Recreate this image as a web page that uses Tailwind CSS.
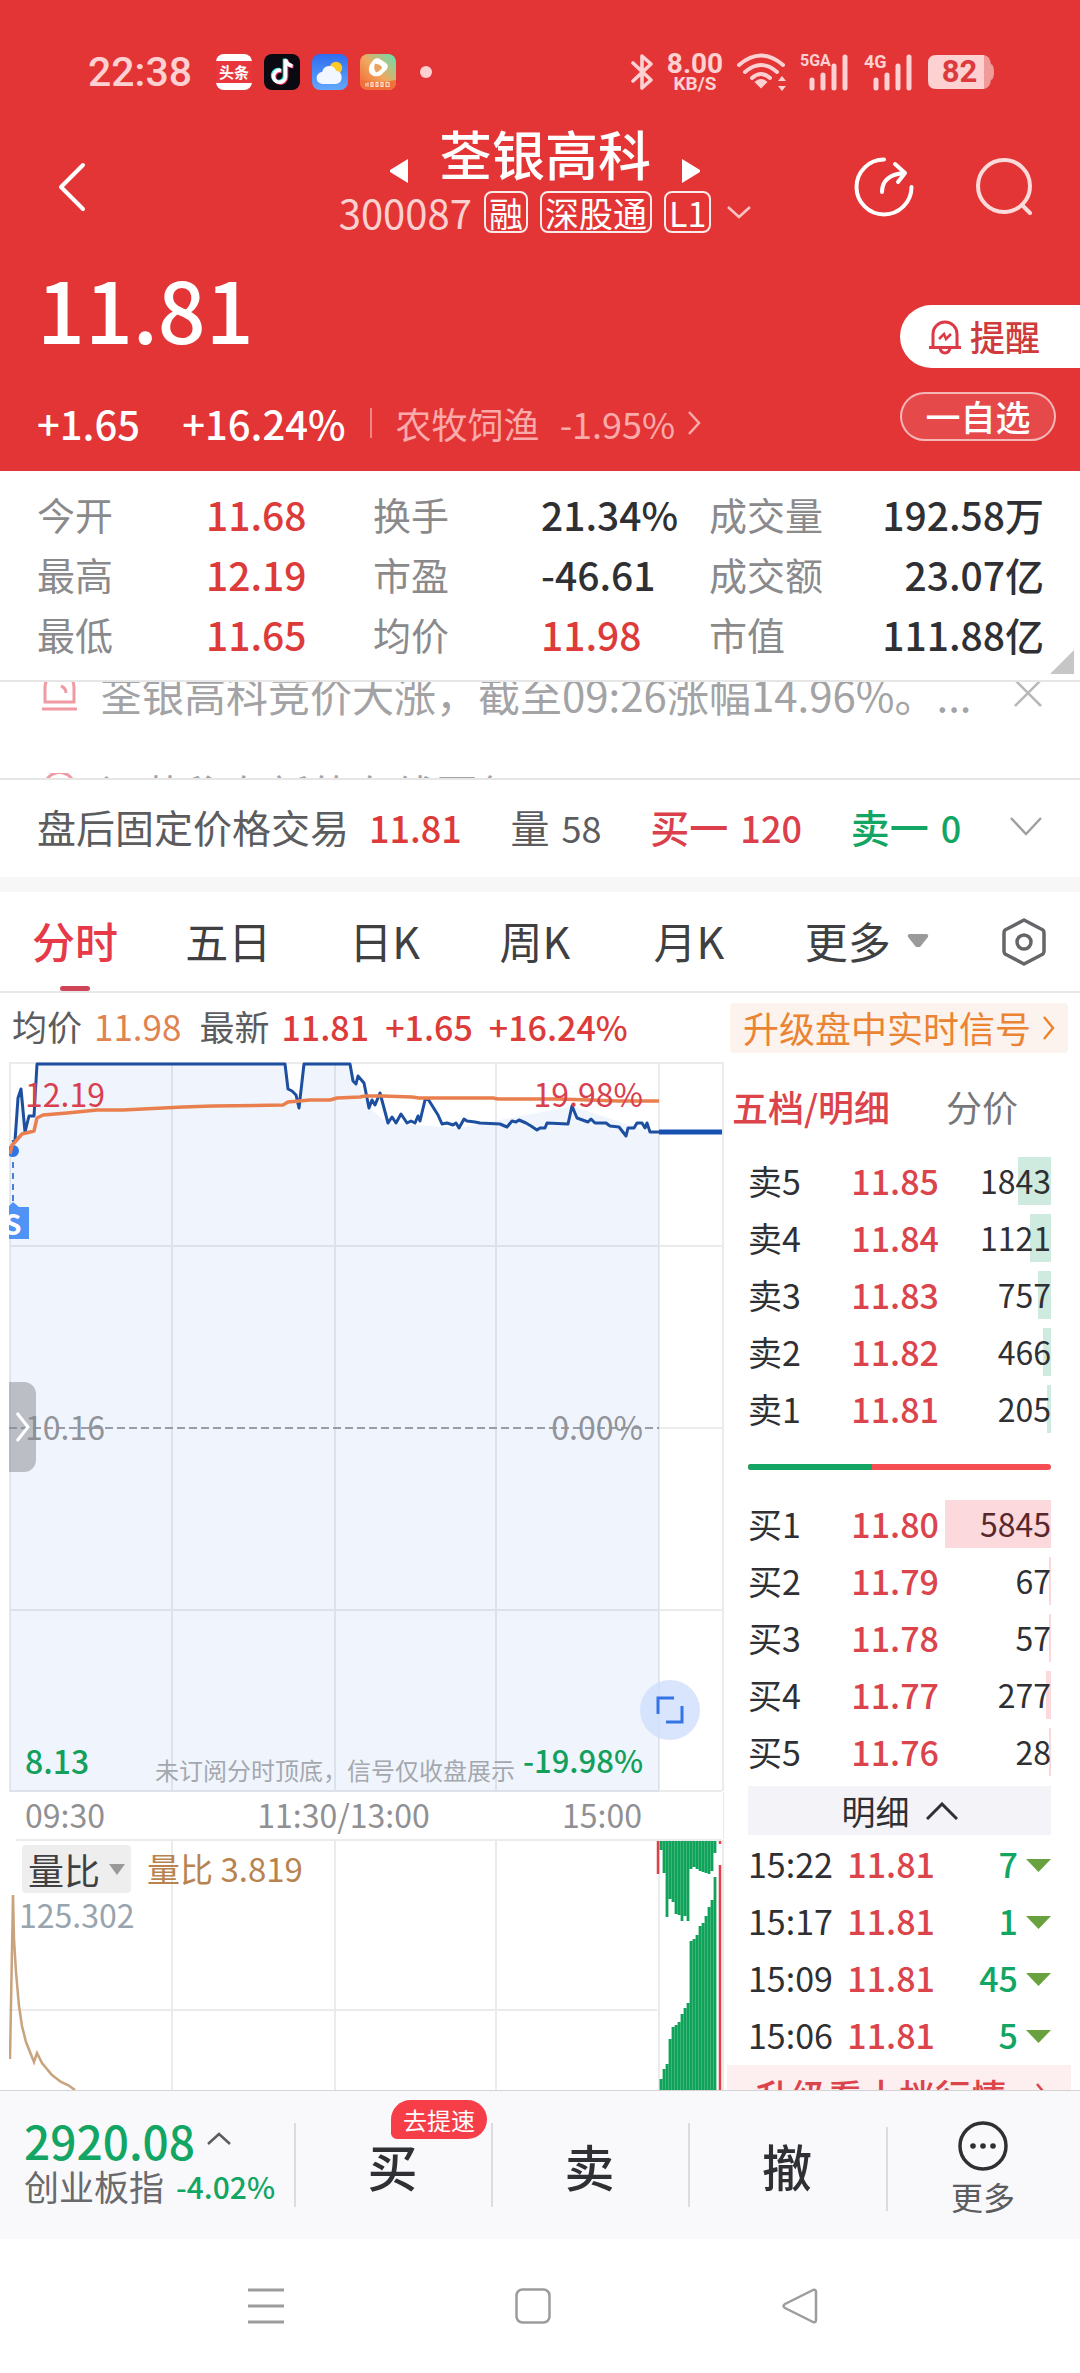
<!DOCTYPE html>
<html lang="zh-CN">
<head>
<meta charset="utf-8">
<meta name="viewport" content="width=device-width, initial-scale=1">
<title>荃银高科 300087</title>
<script src="https://cdn.jsdelivr.net/npm/@tailwindcss/browser@4"></script>
</head>
<body class="bg-white text-[#2f3033] font-['Noto_Sans_CJK_SC',sans-serif]">
<div class="flex min-h-screen flex-col">

<header class="bg-[#e33536] text-white">
  <!-- Status bar -->
  <div class="flex h-[122px] items-center justify-between pl-[88px] pr-[86px] pt-[22px] font-[Roboto,sans-serif] text-[#fdd0d2]">
    <div class="flex items-center gap-3">
      <span class="mr-3 text-[41px] font-medium leading-[44px]">22:38</span>
      <span class="flex size-9 items-center overflow-hidden rounded-lg bg-white"><span class="flex h-[22px] w-full items-center justify-center bg-[#e8363c] font-['Noto_Sans_CJK_SC',sans-serif] text-[15px] font-bold text-white">头条</span></span>
      <svg class="size-9" viewBox="0 0 36 36"><rect width="36" height="36" rx="8" fill="#0b0a12"/><g fill="none" stroke-width="3.6"><path d="M17 16.500a6 6 0 1 0 4.500 6V5.500c1 4 3.500 6 7 6.500" stroke="#35e0dc" transform="translate(-1 -.8)"/><path d="M17 16.500a6 6 0 1 0 4.500 6V5.500c1 4 3.500 6 7 6.500" stroke="#f3356a" transform="translate(1 .8)"/><path d="M17 16.500a6 6 0 1 0 4.500 6V5.500c1 4 3.500 6 7 6.500" stroke="#fff"/></g></svg>
      <svg class="size-9" viewBox="0 0 36 36"><defs><linearGradient id="sky" x2="0" y2="1"><stop stop-color="#2f6df0"/><stop offset="1" stop-color="#62a8fb"/></linearGradient></defs><rect width="36" height="36" rx="8" fill="url(#sky)"/><circle cx="24" cy="14" r="6.200" fill="#ffc928"/><path d="M11 30a6 6 0 0 1-.8-12 7.300 7.300 0 0 1 14-1.200A6.700 6.700 0 0 1 24 30Z" fill="#f1f6ff"/></svg>
      <svg class="size-9" viewBox="0 0 36 36"><defs><linearGradient id="vid" x1="1" x2="0" y2="1"><stop stop-color="#5fe3b4"/><stop offset=".5" stop-color="#f0a860"/><stop offset="1" stop-color="#f2622c"/></linearGradient></defs><rect width="36" height="36" rx="8" fill="url(#vid)"/><path d="M0 26q18 4 36 0v2q0 8-8 8H8q-8 0-8-8Z" fill="#f0703c"/><path d="M14 5.500q2-2 5-1l7 4.500q3 2.500 1 6l-6 6q-3 2-7 1-4-1-5-5-1-6 5-11.500Z" fill="#fff"/><path d="M15 9.500q6 1 7 4-1 3-6 5-3-4-1-9Z" fill="#e9a25f"/><path d="M6 29v3.500m2-4v4m3-4h2v4h-2zm5 0h2v4h-2zm5 0h2v4h-2zm5 0h3v4h-3z" stroke="#ffe2cf" stroke-width="1.200" fill="none"/></svg>
      <span class="ml-3 size-3 rounded-full bg-[#fdd0d2]"></span>
    </div>
    <div class="flex items-center">
      <svg class="h-[38px] w-[23px]" viewBox="0 0 23 38" fill="none" stroke="currentColor" stroke-width="3.600" stroke-linejoin="round" stroke-linecap="round"><path d="m2 10 18 17-9 8V3l9 8L2 28"/></svg>
      <div class="ml-3 flex w-[58px] flex-col items-center font-bold"><span class="text-[28px] leading-[22px]">8.00</span><span class="text-[19px] leading-[17px]">KB/S</span></div>
      <svg class="ml-3 h-[38px] w-[52px]" viewBox="0 0 52 38" fill="none" stroke="currentColor" stroke-width="4" stroke-linecap="round"><path d="M3 12Q25-7 47 12M9 19q16-14 32 0M16 25q9-8 18 0"/><path d="m20 29 5 5 5-5q-5-4-10 0Z" fill="currentColor" stroke-width="2"/><path d="m42 28 4-5 4 5Zm0 5 4 5 4-5Z" fill="currentColor" stroke="none"/></svg>
      <div class="relative ml-3 h-[38px] w-[48px]"><span class="absolute left-0 top-0 text-[16px] font-bold leading-[16px]">5GA</span><svg class="size-full" viewBox="0 0 48 38" stroke="currentColor" stroke-width="5" stroke-linecap="round"><path d="M12 27v8M23 22v13M34 13v22M45 4v31"/></svg></div>
      <div class="relative ml-4 h-[38px] w-[48px]"><span class="absolute left-0 top-0 text-[18px] font-bold leading-[18px]">4G</span><svg class="size-full" viewBox="0 0 48 38" stroke="currentColor" stroke-width="5" stroke-linecap="round"><path d="M12 27v8M23 22v13M34 13v22M45 4v31"/></svg></div>
      <div class="relative ml-4 flex h-[34px] w-[66px] items-center"><svg class="absolute inset-0 size-full" viewBox="0 0 66 34"><path d="M8 0H56V34H8Q0 34 0 26V8Q0 0 8 0Z" fill="#fdd0d2"/><path d="M56 0q6 1 7 9 3 1 3 8t-3 8q-1 8-7 9Z" fill="#f19a9a"/></svg><span class="relative w-[63px] text-center text-[31px] font-bold leading-[34px] text-[#dc3a3c]">82</span></div>
    </div>
  </div>

  <!-- Stock title -->
  <div class="grid h-[128px] grid-cols-[1fr_auto_1fr] items-center pl-[58px] pr-[48px]">
    <button aria-label="返回" class="justify-self-start"><svg class="h-[50px] w-[28px]" viewBox="0 0 28 50" fill="none" stroke="#fff" stroke-width="4" stroke-linecap="round" stroke-linejoin="round"><path d="M25 3 3 25l22 22"/></svg></button>
    <div class="flex flex-col items-center pb-[16px]">
      <div class="flex items-end gap-[30px]">
        <button aria-label="上一只"><svg class="h-[26px] w-[20px]" viewBox="0 0 20 26" fill="#fff"><path d="M19 1v24L1 14v-2Z"/></svg></button>
        <h1 class="text-[53px] font-medium leading-[62px]">荃银高科</h1>
        <button aria-label="下一只"><svg class="h-[26px] w-[20px]" viewBox="0 0 20 26" fill="#fff"><path d="M1 1v24l18-11v-2Z"/></svg></button>
      </div>
      <div class="mt-1 flex items-center gap-3 text-[34px]">
        <span class="text-[40px] leading-[48px] text-[#fbd0d0]">300087</span>
        <span class="flex h-[42px] items-center rounded-lg border-2 border-white/90 px-[3px]">融</span>
        <span class="flex h-[42px] items-center rounded-lg border-2 border-white/90 px-[3px]">深股通</span>
        <span class="flex h-[42px] items-center rounded-lg border-2 border-white/90 px-[3px]">L1</span>
        <svg class="ml-1 h-[13px] w-[24px]" viewBox="0 0 24 13" fill="none" stroke="#f9c4c4" stroke-width="2.500"><path d="m1 1 11 10L23 1"/></svg>
      </div>
    </div>
    <div class="flex items-center gap-[62px] justify-self-end">
      <button aria-label="分享"><svg class="size-[60px]" viewBox="0 0 60 60" fill="none" stroke="#fff" stroke-width="4" stroke-linecap="round" stroke-linejoin="round"><path d="M30 2.500A27.500 27.500 0 1 0 57.500 30"/><path d="M28 35q0-17 22-19M41 7l10 9-7 9"/></svg></button>
      <button aria-label="搜索"><svg class="h-[60px] w-[56px]" viewBox="0 0 56 60" fill="none" stroke="#fbdada" stroke-width="4" stroke-linecap="round"><circle cx="28" cy="29" r="26"/><path d="m46 48 8 8"/></svg></button>
    </div>
  </div>

  <!-- Price -->
  <div class="flex h-[221px] justify-between pl-[37px]">
    <div>
      <p class="h-[140px] pt-[3px] text-[84px] font-medium leading-[110px]">11.81</p>
      <div class="flex items-center text-[40px] leading-[66px]">
        <span class="font-medium">+1.65</span>
        <span class="ml-[42px] font-medium">+16.24%</span>
        <span class="ml-6 h-[30px] w-[2px] bg-white/40"></span>
        <a href="#" class="ml-6 flex items-center text-[36px] text-[#f9aaaa]">农牧饲渔<span class="ml-5">-1.95%</span><svg class="ml-3 h-[24px] w-[14px]" viewBox="0 0 14 24" fill="none" stroke="currentColor" stroke-width="2.500"><path d="m2 1 10 11L2 23"/></svg></a>
      </div>
    </div>
    <div class="flex flex-col gap-6 pt-[55px]">
      <button class="flex h-[63px] w-[180px] items-center gap-2 rounded-l-full bg-white pl-[28px] text-[35px] font-medium text-[#cf3a3c]"><svg class="h-[36px] w-[34px]" viewBox="0 0 34 36" fill="none" stroke="#dd3a48" stroke-width="3"><path d="M5 28V15a12 12 0 0 1 24 0v13M1 28.500h32M12 29q1 5 5 5t5-5"/><path d="m11 20 5-5 2 5 5-5" stroke-width="2.500"/></svg>提醒</button>
      <button class="flex h-[49px] w-[156px] items-center justify-center rounded-full border-2 border-white/60 bg-white/10 text-[35px] font-medium">一自选</button>
    </div>
  </div>
</header>

<!-- Key figures -->
<section class="relative h-[211px] border-b-2 border-[#e6e6e6] pl-[37px] pr-[36px] pt-[13px]">
  <dl class="grid grid-cols-[169fr_167fr_168fr_168fr_120fr_215fr] text-[38px] leading-[60px] [&>dd]:text-[39px] [&>dd]:font-medium [&>dt]:text-[#8a8a8c]">
    <dt>今开</dt><dd class="text-[#dc3b3a]">11.68</dd><dt>换手</dt><dd>21.34%</dd><dt>成交量</dt><dd class="text-right">192.58万</dd>
    <dt>最高</dt><dd class="text-[#dc3b3a]">12.19</dd><dt>市盈</dt><dd>-46.61</dd><dt>成交额</dt><dd class="text-right">23.07亿</dd>
    <dt>最低</dt><dd class="text-[#dc3b3a]">11.65</dd><dt>均价</dt><dd class="text-[#dc3b3a]">11.98</dd><dt>市值</dt><dd class="text-right">111.88亿</dd>
  </dl>
  <svg class="absolute bottom-[6px] right-[6px] size-6" viewBox="0 0 24 24" fill="#c6c6c6"><path d="M24 0v24H0Z"/></svg>
</section>

<!-- Scrolling notices -->
<section class="h-[98px] overflow-hidden border-b-2 border-[#e6e6e6] text-[42px] text-[#a3a3a5]">
  <div class="-mt-[38px] flex h-[98px] items-center pl-[41px] pr-[38px]">
    <svg class="h-[38px] w-[37px] shrink-0" viewBox="0 0 37 38" fill="none" stroke="#f09aa4" stroke-width="3"><path d="M4 28V13a14 13 0 0 1 29 0v15ZM1 35h35M20 12q5 2 5 7"/></svg>
    <p class="ml-[22px] grow whitespace-nowrap">荃银高科竞价大涨，截至09:26涨幅14.96%。...</p>
    <svg class="size-[28px] shrink-0" viewBox="0 0 28 28" stroke="#b8b8b8" stroke-width="2.500"><path d="m1 1 26 26M27 1 1 27"/></svg>
  </div>
  <div class="flex h-[100px] items-center pl-[41px] pr-[38px]">
    <svg class="h-[38px] w-[37px] shrink-0" viewBox="0 0 37 38" fill="none" stroke="#f09aa4" stroke-width="3"><path d="M4 28V13a14 13 0 0 1 29 0v15ZM1 35h35M20 12q5 2 5 7"/></svg>
    <p class="ml-[22px] grow whitespace-nowrap">问董秘有新的在线回复</p>
    <svg class="size-[28px] shrink-0" viewBox="0 0 28 28" stroke="#b8b8b8" stroke-width="2.500"><path d="m1 1 26 26M27 1 1 27"/></svg>
  </div>
</section>

<!-- After-hours trading -->
<section class="flex h-[97px] items-center justify-between pb-[4px] pl-[37px] pr-[38px] text-[39px] text-[#5c5c5e]">
  <p>盘后固定价格交易<span class="ml-5 text-[36px] font-medium text-[#dc3b3a]">11.81</span></p>
  <p>量<span class="ml-3 text-[36px]">58</span></p>
  <p class="font-medium text-[#dc3f4c]">买一<span class="ml-3 text-[36px]">120</span></p>
  <p class="font-medium text-[#12a563]">卖一<span class="ml-3 text-[36px]">0</span></p>
  <button aria-label="展开"><svg class="h-[19px] w-[32px]" viewBox="0 0 32 19" fill="none" stroke="#a0a0a0" stroke-width="2.500"><path d="m1 1 15 16L31 1"/></svg></button>
</section>
<div class="h-[15px] bg-[#f7f7f7]"></div>

<!-- Chart period tabs -->
<nav class="grid h-[101px] grid-cols-[153fr_164fr_150fr_154fr_151fr_197fr_78fr] items-center border-b-2 border-[#e8e8e8] pl-[32px] text-[43px] leading-[97px] text-[#404042]">
  <a href="#" class="relative self-start justify-self-start font-medium text-[#e63a48]">分时<span class="absolute -bottom-[2px] left-1/2 h-[5px] w-[30px] -translate-x-1/2 rounded-sm bg-[#cf4558]"></span></a>
  <a href="#" class="self-start">五日</a><a href="#" class="self-start">日K</a><a href="#" class="self-start">周K</a><a href="#" class="self-start">月K</a>
  <a href="#" class="flex items-center gap-4 self-start">更多<svg class="h-[14px] w-[22px]" viewBox="0 0 22 14" fill="#9a9a9a"><path d="M2 0h18q2 1 1 3l-8 10h-4L1 3Q0 1 2 0Z"/></svg></a>
  <button aria-label="设置"><svg class="h-[48px] w-[44px]" viewBox="0 0 44 48" fill="none" stroke="#66666a" stroke-width="3.500" stroke-linejoin="round"><path d="M22 2 41 12q1 1 1 3v18q0 2-1 3L22 46 3 36q-1-1-1-3V15q0-2 1-3Z"/><circle cx="22" cy="24" r="7"/></svg></button>
</nav>

<!-- Latest quote line -->
<section class="flex h-[69px] items-center justify-between pl-[12px] pr-[12px] text-[34px] font-medium text-[#dc3b3a]">
  <p class="flex items-center pb-[2px]"><span class="text-[35px] font-normal text-[#5c5c5e]">均价</span><span class="ml-3 text-[35px] font-normal text-[#e08350]">11.98</span><span class="ml-[18px] text-[35px] font-normal text-[#5c5c5e]">最新</span><span class="ml-3">11.81</span><span class="ml-[16px]">+1.65</span><span class="ml-[16px]">+16.24%</span></p>
  <a href="#" class="flex h-[50px] items-center gap-3 rounded bg-[#fdf3ee] px-[13px] text-[36px] font-normal leading-[50px] text-[#ea8432]"><span class="-mt-[2px]">升级盘中实时信号</span><svg class="h-[24px] w-[12px]" viewBox="0 0 12 24" fill="none" stroke="currentColor" stroke-width="2.500"><path d="m1 1 9 11-9 11"/></svg></a>
</section>

<main class="grid h-[1028px] grid-cols-[724fr_356fr] overflow-hidden">
  <!-- Charts -->
  <div class="pl-[9px]">
    <div class="relative h-[730px] overflow-hidden">
      <svg class="size-full" viewBox="9 0 715 730" preserveAspectRatio="none" fill="none">
        <path d="M10 92V730H659V70L650 70 572 44 459 66 388 61 369 46 350 2H304L299 46 288 27 285 2H37L34 54 25 70 21 27Z" fill="#f0f5fd"/>
        <path d="M9 1H724M10 1V729M172 1V729M335 1V729M496 1V729M659 1V729M723 1V729M9 184H722M9 548H722M659 366H722M9 729H722" stroke="#000" stroke-opacity=".08" stroke-width="2"/>
        <path d="M9 366H659" stroke="#9a9da6" stroke-width="2" stroke-dasharray="8 4"/>
        <circle cx="13" cy="89" r="6" fill="#2f74e8"/>
        <path d="M13 100V140" stroke="#4a7fd8" stroke-width="2" stroke-dasharray="6 5"/>
        <path d="M9 144 13 140 19 145H29V177H9Z" fill="#5093f7"/>
        <path d="M12 80 15 79 18 36 21 27 25 70 29 54 34 54 37 2 285 2 288 27 292 29 296 33 299 46 304 2 350 2 353 19 356 22 358 14 364 21 369 46 372 38 375 43 380 31 388 61 392 55 396 61 401 52 407 61 411 59 415 61 418 54 420 59 425 38 428 37 438 53 442 62 447 61 453 63 456 61 459 66 464 57 467 59 475 60 480 61 500 62 507 65 512 59 516 60 519 58 526 61 531 64 537 68 540 66 545 66 547 61 568 62 572 44 577 56 588 60 591 57 595 61 606 61 610 64 619 65 626 74 628 66 634 66 637 61 642 61 645 66 647 61 650 70 659 70" stroke="#1d4fa0" stroke-width="3" stroke-linejoin="round"/>
        <path d="M659 70H722" stroke="#1650b0" stroke-width="5"/>
        <path d="M10 92 12 83 15 80 22 72 34 69 37 56 43 53 67 51 97 48 123 48 183 45 213 44 283 43 288 40 310 38 330 38 337 36 360 35 365 34 382 34 412 35 419 36 493 36 498 37 559 37 619 39 659 39" stroke="#e97f4e" stroke-width="3.500" stroke-linejoin="round"/>
      </svg>
      <div class="absolute inset-0 text-[32px] leading-[40px]">
        <div class="absolute left-[16px] right-[81px] top-[11px] flex justify-between text-[#d84050]"><span>12.19</span><span>19.98%</span></div>
        <div class="absolute left-[16px] right-[81px] top-[344px] flex justify-between text-[#90939a]"><span>10.16</span><span>0.00%</span></div>
        <div class="absolute left-[16px] right-[81px] top-[678px] flex items-center justify-between font-medium text-[#12a05c]"><span>8.13</span><span class="text-[31px]">-19.98%</span></div>
        <p class="absolute left-[146px] top-[688px] text-[24px] font-normal text-[#a4a8ae]">未订阅分时顶底，信号仅收盘展示</p>
        <span class="absolute -left-[5px] top-[141px] text-[28px] font-bold text-white">S</span>
      </div>
      <button aria-label="展开侧栏" class="absolute left-0 top-[320px] flex h-[90px] w-[27px] items-center justify-center rounded-r-xl bg-[#85898e]/50"><svg class="h-[30px] w-[14px]" viewBox="0 0 14 30" fill="none" stroke="#fff" stroke-width="3"><path d="m1 1 11 14L1 29"/></svg></button>
      <button aria-label="全屏" class="absolute bottom-[52px] right-[24px] flex size-[60px] items-center justify-center rounded-full bg-[#cfdefb]/80"><svg class="size-[28px]" viewBox="0 0 28 28" fill="none" stroke="#3474e6" stroke-width="3"><path d="M2 18V2h16M26 10v16H10"/></svg></button>
    </div>
    <div class="flex h-[47px] justify-between border-r border-[#e8e8e8] pl-[16px] pr-[81px] text-[32px] leading-[44px] text-[#909093]"><span>09:30</span><span class="ml-[20px]">11:30/13:00</span><span>15:00</span></div>
    <div class="relative h-[251px]">
      <svg class="size-full" viewBox="9 0 715 251" preserveAspectRatio="none" fill="none">
        <path d="M16 1H722M172 1V251M335 1V251M496 1V251M659 1V251M723 1V251M9 171H657" stroke="#000" stroke-opacity=".08" stroke-width="2"/>
        <path d="M10 220 13 56 14 100 16 133 19 167 22 187 26 203 34 223 37 214 42 224 52 236 61 243 68 246 75 251" stroke="#c9a27e" stroke-width="2.500"/>
        <path d="M661 2V11M664 2V34M667 2V78M670 2V60M673 2V63M676 2V75M679 2V76M682 2V82M685 2V77M688 2V82M691 2V30M694 2V28M697 2V30M700 2V32M703 2V33M706 2V34M709 2V35M712 2V32M715 2V14M661 240V251M664 230V251M667 225V251M670 200V251M673 188V251M676 186V251M679 183V251M682 175V251M685 169V251M688 164V251M691 102V251M694 100V251M697 96V251M700 87V251M703 84V251M706 77V251M709 68V251M712 61V251M715 38V251" stroke="#0fa35a" stroke-width="2.800"/>
        <path d="M658 2V35M720 2V5M720 26V251" stroke="#e0404a" stroke-width="2.500"/>
      </svg>
      <div class="absolute left-[13px] top-[6px] flex h-[48px] items-center">
        <button class="flex h-[48px] items-center gap-[9px] rounded bg-[#eeeeef] px-[6px] text-[36px] text-[#404042]">量比<svg class="h-[11px] w-[16px]" viewBox="0 0 16 11" fill="#999"><path d="M0 0h16L8 11Z"/></svg></button>
        <span class="ml-4 text-[33px] text-[#b98350]">量比 3.819</span>
      </div>
      <span class="absolute left-[10px] top-[55px] text-[32px] leading-[40px] text-[#98a4ae]">125.302</span>
    </div>
  </div>

  <!-- Order book -->
  <aside>
    <div class="flex gap-[56px] pl-[8px] pt-[18px] text-[36px] leading-[52px]"><button class="font-medium text-[#dc444c]">五档/明细</button><button class="text-[#77777a]">分价</button></div>
    <div class="pl-[24px] pr-[29px]">
      <table class="mt-[21px] w-full text-[34px] leading-[46px] [&_td]:h-[57px] [&_td]:p-0 [&_td]:pb-[2px] [&_td]:align-middle">
        <tbody>
          <tr><td>卖5</td><td class="text-right font-medium text-[#dc444c]">11.85</td><td class="w-[112px] text-right text-[32px]"><div class="relative h-[48px]"><span class="absolute right-0 h-full w-[33px] bg-[#cfeade]"></span><span class="relative">1843</span></div></td></tr>
          <tr><td>卖4</td><td class="text-right font-medium text-[#dc444c]">11.84</td><td class="w-[112px] text-right text-[32px]"><div class="relative h-[48px]"><span class="absolute right-0 h-full w-[21px] bg-[#cfeade]"></span><span class="relative">1121</span></div></td></tr>
          <tr><td>卖3</td><td class="text-right font-medium text-[#dc444c]">11.83</td><td class="w-[112px] text-right text-[32px]"><div class="relative h-[48px]"><span class="absolute right-0 h-full w-[13px] bg-[#cfeade]"></span><span class="relative">757</span></div></td></tr>
          <tr><td>卖2</td><td class="text-right font-medium text-[#dc444c]">11.82</td><td class="w-[112px] text-right text-[32px]"><div class="relative h-[48px]"><span class="absolute right-0 h-full w-[8px] bg-[#cfeade]"></span><span class="relative">466</span></div></td></tr>
          <tr><td>卖1</td><td class="text-right font-medium text-[#dc444c]">11.81</td><td class="w-[112px] text-right text-[32px]"><div class="relative h-[48px]"><span class="absolute right-0 h-full w-[4px] bg-[#cfeade]"></span><span class="relative">205</span></div></td></tr>
        </tbody>
      </table>
      <div class="my-[26px] flex h-[6px] overflow-hidden rounded-full bg-[#f54e52]"><span class="w-[41%] bg-[#12a563]"></span></div>
      <table class="w-full text-[34px] leading-[46px] [&_td]:h-[57px] [&_td]:p-0 [&_td]:pb-[2px] [&_td]:align-middle">
        <tbody>
          <tr><td>买1</td><td class="text-right font-medium text-[#dc444c]">11.80</td><td class="w-[112px] text-right text-[32px]"><div class="relative h-[48px]"><span class="absolute right-0 h-full w-[106px] bg-[#fbd9dc]"></span><span class="relative text-[#58282c]">5845</span></div></td></tr>
          <tr><td>买2</td><td class="text-right font-medium text-[#dc444c]">11.79</td><td class="w-[112px] text-right text-[32px]"><div class="relative h-[48px]"><span class="absolute right-0 h-full w-[2px] bg-[#fbd9dc]"></span><span class="relative">67</span></div></td></tr>
          <tr><td>买3</td><td class="text-right font-medium text-[#dc444c]">11.78</td><td class="w-[112px] text-right text-[32px]"><div class="relative h-[48px]"><span class="absolute right-0 h-full w-[2px] bg-[#fbd9dc]"></span><span class="relative">57</span></div></td></tr>
          <tr><td>买4</td><td class="text-right font-medium text-[#dc444c]">11.77</td><td class="w-[112px] text-right text-[32px]"><div class="relative h-[48px]"><span class="absolute right-0 h-full w-[5px] bg-[#fbd9dc]"></span><span class="relative">277</span></div></td></tr>
          <tr><td>买5</td><td class="text-right font-medium text-[#dc444c]">11.76</td><td class="w-[112px] text-right text-[32px]"><div class="relative h-[48px]"><span class="absolute right-0 h-full w-[2px] bg-[#fbd9dc]"></span><span class="relative">28</span></div></td></tr>
        </tbody>
      </table>
      <button class="mt-[5px] flex h-[49px] w-full items-center justify-center gap-4 bg-[#f4f4f8] text-[34px]">明细<svg class="h-[18px] w-[32px]" viewBox="0 0 32 18" fill="none" stroke="#2f3033" stroke-width="3"><path d="M1 17 16 2l15 15"/></svg></button>
      <table class="w-full text-[34px] leading-[57px] [&_td]:h-[57px] [&_td]:p-0">
        <tbody>
          <tr><td>15:22</td><td class="text-right font-medium text-[#dc444c]">11.81</td><td class="w-[116px]"><div class="flex items-center justify-end gap-2 font-medium text-[#12a563]">7<svg class="mt-[4px] h-[13px] w-[25px]" viewBox="0 0 25 13" fill="#68a13e"><path d="M0 0h25L12.500 13Z"/></svg></div></td></tr>
          <tr><td>15:17</td><td class="text-right font-medium text-[#dc444c]">11.81</td><td class="w-[116px]"><div class="flex items-center justify-end gap-2 font-medium text-[#12a563]">1<svg class="mt-[4px] h-[13px] w-[25px]" viewBox="0 0 25 13" fill="#68a13e"><path d="M0 0h25L12.500 13Z"/></svg></div></td></tr>
          <tr><td>15:09</td><td class="text-right font-medium text-[#dc444c]">11.81</td><td class="w-[116px]"><div class="flex items-center justify-end gap-2 font-medium text-[#12a563]">45<svg class="mt-[4px] h-[13px] w-[25px]" viewBox="0 0 25 13" fill="#68a13e"><path d="M0 0h25L12.500 13Z"/></svg></div></td></tr>
          <tr><td>15:06</td><td class="text-right font-medium text-[#dc444c]">11.81</td><td class="w-[116px]"><div class="flex items-center justify-end gap-2 font-medium text-[#12a563]">5<svg class="mt-[4px] h-[13px] w-[25px]" viewBox="0 0 25 13" fill="#68a13e"><path d="M0 0h25L12.500 13Z"/></svg></div></td></tr>
        </tbody>
      </table>
    </div>
    <a href="#" class="ml-[3px] mr-[9px] mt-[2px] flex h-[60px] items-center justify-between bg-[#fdeeef] pl-[28px] pr-[23px] text-[36px] font-medium leading-[60px] text-[#dc444c]">升级看十档行情<svg class="h-[24px] w-[12px]" viewBox="0 0 12 24" fill="none" stroke="currentColor" stroke-width="2.500"><path d="m1 1 9 11-9 11"/></svg></a>
  </aside>
</main>

<!-- Trade bar -->
<footer>
  <div class="grid h-[149px] grid-cols-[294fr_197fr_197fr_198fr_194fr] border-t border-[#d4d4d6] bg-[#f9f9fc] [&>button]:relative">
    <div class="flex flex-col justify-center pb-[4px] pl-[24px]">
      <p class="flex items-center gap-3 text-[46px] font-medium leading-[46px] text-[#12a563]">2920.08<svg class="mb-1 h-[13px] w-[24px]" viewBox="0 0 24 13" fill="none" stroke="#5c5c5e" stroke-width="2.500"><path d="m1 12 11-10 11 10"/></svg></p>
      <p class="flex items-center gap-3 text-[35px] leading-[46px] text-[#6a6a6d]">创业板指<span class="text-[30px] font-medium text-[#12a563]">-4.02%</span></p>
    </div>
    <button class="flex items-center justify-center text-[50px] font-medium"><span class="absolute left-0 h-[84px] w-[2px] bg-[#dcdce0]"></span>买<span class="absolute right-[4px] top-[9px] flex h-[39px] w-[96px] items-center justify-center rounded-[20px] rounded-bl-md bg-[#f63e48] text-[24px] font-normal text-white">去提速</span></button>
    <button class="flex items-center justify-center text-[50px] font-medium"><span class="absolute left-0 h-[84px] w-[2px] bg-[#dcdce0]"></span>卖</button>
    <button class="flex items-center justify-center text-[50px] font-medium"><span class="absolute left-0 h-[84px] w-[2px] bg-[#dcdce0]"></span>撤</button>
    <button class="flex flex-col items-center justify-center gap-1 pt-2 text-[32px] leading-[42px] text-[#5c5c5e]"><span class="absolute left-0 h-[84px] w-[2px] bg-[#dcdce0]"></span><svg class="size-[50px]" viewBox="0 0 50 50" fill="#2f3033"><circle cx="25" cy="25" r="23" fill="none" stroke="#2f3033" stroke-width="3.500"/><circle cx="15" cy="25" r="2.800"/><circle cx="25" cy="25" r="2.800"/><circle cx="35" cy="25" r="2.800"/></svg>更多</button>
  </div>
  <div class="flex h-[134px] items-center justify-between pl-[248px] pr-[262px]">
    <button aria-label="最近任务"><svg class="size-[36px]" viewBox="0 0 36 36" stroke="#9c9c9c" stroke-width="3"><path d="M0 2h36M0 18h36M0 34h36"/></svg></button>
    <button aria-label="主页"><svg class="size-[36px]" viewBox="0 0 36 36" fill="none" stroke="#9c9c9c" stroke-width="2.500"><rect x="1.500" y="1.500" width="33" height="33" rx="6"/></svg></button>
    <button aria-label="后退"><svg class="size-[36px]" viewBox="0 0 36 36" fill="none" stroke="#9c9c9c" stroke-width="2.500" stroke-linejoin="round"><path d="M34 4v28q0 3-3 2L3 20q-3-2 0-4L31 2q3-1 3 2Z"/></svg></button>
  </div>
</footer>
</div>
</body>
</html>
